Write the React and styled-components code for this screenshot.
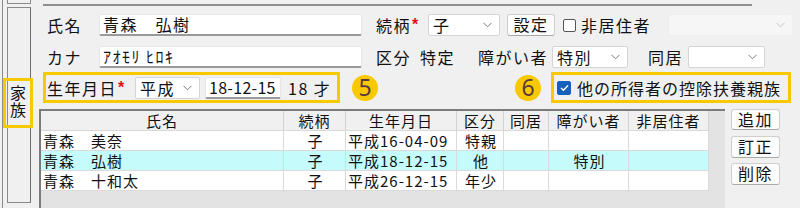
import React from 'react';
import styled, { createGlobalStyle } from 'styled-components';

const GlobalStyle = createGlobalStyle`
  html, body {
    margin: 0;
    padding: 0;
    background: #f0f0f0;
    font-family: "Noto Sans CJK JP", "Noto Sans", sans-serif;
    color: #111;
  }
  * { box-sizing: border-box; }
`;

const YELLOW = '#f9c900';

const Page = styled.div`
  display: flex;
  width: 800px;
  height: 208px;
  overflow: hidden;
`;

const SideBar = styled.div`
  width: 41px;
  margin-left: 2px;
  border-left: 1px solid #8a8a8a;
  display: flex;
  flex-direction: column;
  flex-shrink: 0;
`;

const TopStub = styled.div`
  margin-left: 4px;
  width: 24px;
  height: 4px;
  border: 1px solid #8a8a8a;
  border-top: none;
`;

const Tab = styled.div`
  margin-left: 4px;
  margin-top: 3px;
  width: 24px;
  height: 196px;
  border: 1px solid #8a8a8a;
  border-right-color: #6e6e6e;
`;

const TabLabel = styled.div`
  margin-top: 70px;
  margin-left: -5px;
  width: 30px;
  height: 50px;
  border: 3px solid ${YELLOW};
  display: flex;
  justify-content: center;
  padding-top: 4px;
`;

const Vertical = styled.span`
  writing-mode: vertical-rl;
  font-size: 16px;
  letter-spacing: 1px;
  line-height: 20px;
`;

const Main = styled.div`
  flex: 1;
  display: flex;
  flex-direction: column;
  padding-left: 2px;
`;

const Rule = styled.div`
  margin-top: 4px;
  margin-left: -2px;
  width: 709px;
  border-top: 2px solid #8e8e8e;
`;

const Row = styled.div`
  display: flex;
  align-items: center;
  height: ${p => p.$h || 22}px;
  margin-top: ${p => p.$mt || 0}px;
  padding-left: 2px;
`;

const Label = styled.span`
  display: inline-block;
  width: ${p => p.$w}px;
  margin-left: ${p => p.$ml || 0}px;
  font-size: 16px;
  letter-spacing: ${p => p.$ls ?? 1.5}px;
  white-space: nowrap;
  flex-shrink: 0;
`;

const Req = styled.span`
  color: #e01010;
  font-family: "Liberation Sans", sans-serif;
  font-weight: bold;
  font-size: 16px;
  vertical-align: 2px;
  letter-spacing: 0;
  margin-left: 1px;
`;

const TextBox = styled.div`
  width: ${p => p.$w}px;
  margin-left: ${p => p.$ml || 0}px;
  height: 22px;
  background: #fff;
  border: 1px solid #e6e6e6;
  border-bottom: 2px solid #9a9a9a;
  border-radius: 2px;
  font-size: 16px;
  line-height: 19px;
  padding-left: 3px;
  letter-spacing: ${p => p.$ls ?? 1.5}px;
  flex-shrink: 0;
  white-space: nowrap;
`;

const SelectBox = styled.div`
  width: ${p => p.$w}px;
  margin-left: ${p => p.$ml || 0}px;
  height: 22px;
  display: flex;
  align-items: center;
  justify-content: space-between;
  background: ${p => (p.$disabled ? '#f6f6f6' : '#fff')};
  border: 1px solid ${p => (p.$disabled ? '#efefef' : '#d4d4d4')};
  border-radius: 2px;
  padding: 0 7px 0 4px;
  font-size: 16px;
  letter-spacing: 1.5px;
  flex-shrink: 0;
`;

const Chevron = ({ light }) => (
  <svg width="9" height="6" viewBox="0 0 9 6">
    <polyline points="0.5,0.8 4.5,4.8 8.5,0.8" fill="none" stroke={light ? '#c4c4c4' : '#7a7a7a'} strokeWidth="1" />
  </svg>
);

const Select = ({ w, ml, value, disabled }) => (
  <SelectBox $w={w} $ml={ml} $disabled={disabled}>
    <span>{value}</span>
    <Chevron light={disabled} />
  </SelectBox>
);

const Button = styled.div`
  width: ${p => p.$w}px;
  height: ${p => p.$h || 21}px;
  margin-left: ${p => p.$ml || 0}px;
  margin-top: ${p => p.$mt || 0}px;
  background: #fcfcfc;
  border: 1px solid #cfcfcf;
  border-bottom-color: #a9a9a9;
  border-radius: 3px;
  font-size: 16px;
  letter-spacing: 1.5px;
  line-height: 19px;
  text-align: center;
  flex-shrink: 0;
`;

const Check = styled.span`
  display: inline-flex;
  align-items: center;
  justify-content: center;
  width: ${p => (p.$on ? 14 : 13)}px;
  height: ${p => (p.$on ? 14 : 13)}px;
  margin-left: ${p => p.$ml || 0}px;
  border-radius: 2px;
  border: 1px solid ${p => (p.$on ? '#1560bd' : '#555')};
  background: ${p => (p.$on ? '#1560bd' : '#fff')};
  flex-shrink: 0;
`;

const Group = styled.div`
  display: flex;
  align-items: center;
  width: ${p => p.$w}px;
  height: 31px;
  margin-left: ${p => p.$ml || 0}px;
  border: 3px solid ${YELLOW};
  padding-left: ${p => p.$pl || 0}px;
  flex-shrink: 0;
`;

const Badge = styled.span`
  display: inline-flex;
  align-items: center;
  justify-content: center;
  width: 26px;
  height: 26px;
  margin-left: ${p => p.$ml || 0}px;
  border-radius: 50%;
  background: ${YELLOW};
  color: #5a3a3c;
  font-family: "Noto Sans", "Open Sans", sans-serif;
  font-size: 23px;
  line-height: 1;
  flex-shrink: 0;
`;

const Lower = styled.div`
  display: flex;
  margin-top: 6px;
  margin-left: -6px;
  flex: 1;
`;

const TableWrap = styled.div`
  width: 686px;
  height: 100px;
  background: #e3e3e3;
  border-top: 2px solid #7b7b7b;
  border-left: 2px solid #7b7b7b;
  flex-shrink: 0;
`;

const Grid = styled.div`
  display: grid;
  grid-template-columns: 243px 62px 111px 47px 45px 80px 80px;
  width: 668px;
`;

const Head = styled.div`
  height: 20px;
  background: #f0f0f0;
  border-right: 1px solid #d2d2d2;
  border-bottom: 1px solid #d8d8d8;
  font-size: 15px;
  letter-spacing: 1px;
  line-height: 19px;
  text-align: center;
`;

const Cell = styled.div`
  height: 20px;
  background: ${p => (p.$sel ? '#c6fbfb' : '#fff')};
  border-right: 1px solid #dadada;
  border-bottom: 1px solid #dadada;
  font-size: 15px;
  letter-spacing: 1px;
  line-height: 19px;
  padding-left: 2px;
  text-align: ${p => p.$align || 'left'};
  white-space: nowrap;
  overflow: hidden;
`;

const Side = styled.div`
  display: flex;
  flex-direction: column;
  margin-left: 6px;
`;

const columns = [
  { title: '氏名', align: 'left' },
  { title: '続柄', align: 'center' },
  { title: '生年月日', align: 'left' },
  { title: '区分', align: 'center' },
  { title: '同居', align: 'center' },
  { title: '障がい者', align: 'center' },
  { title: '非居住者', align: 'center' },
];

const rows = [
  ['青森　美奈', '子', '平成16-04-09', '特親', '', '', ''],
  ['青森　弘樹', '子', '平成18-12-15', '他', '', '特別', ''],
  ['青森　十和太', '子', '平成26-12-15', '年少', '', '', ''],
];

export default function App() {
  return (
    <>
      <GlobalStyle />
      <Page>
        <SideBar>
          <TopStub />
          <Tab>
            <TabLabel>
              <Vertical>家族</Vertical>
            </TabLabel>
          </Tab>
        </SideBar>
        <Main>
          <Rule />
          <Row $mt={8}>
            <Label $w={52}>氏名</Label>
            <TextBox $w={263}>青森　弘樹</TextBox>
            <Label $w={52} $ml={14}>続柄<Req>*</Req></Label>
            <Select w={72} value="子" />
            <Button $w={48} $h={22} $ml={7}>設定</Button>
            <Check $ml={8} />
            <Label $w={80} $ml={5}>非居住者</Label>
            <Select w={125} ml={7} value="" disabled />
          </Row>
          <Row $mt={10}>
            <Label $w={52}>カナ</Label>
            <TextBox $w={263} $ls={1.5}>ｱｵﾓﾘ ﾋﾛｷ</TextBox>
            <Label $w={44} $ml={14}>区分</Label>
            <Label $w={58}>特定</Label>
            <Label $w={74}>障がい者</Label>
            <Select w={76} value="特別" />
            <Label $w={40} $ml={20}>同居</Label>
            <Select w={77} value="" />
          </Row>
          <Row $mt={4} $h={31}>
            <Group $w={297} $ml={-4} $pl={1}>
              <Label $w={88}>生年月日<Req>*</Req></Label>
              <Select w={65} value="平成" />
              <TextBox $w={76} $ml={5} $ls={0.3}>18-12-15</TextBox>
              <Label $w={50} $ml={7}>18 才</Label>
            </Group>
            <Badge $ml={12}>5</Badge>
            <Badge $ml={137}>6</Badge>
            <Group $w={240} $ml={10} $pl={3}>
              <Check $on>
                <svg width="9" height="8" viewBox="0 0 9 8">
                  <polyline points="1,4 3.5,6.3 8,1.5" fill="none" stroke="#fff" strokeWidth="1.4" />
                </svg>
              </Check>
              <Label $w={215} $ml={6} $ls={1}>他の所得者の控除扶養親族</Label>
            </Group>
          </Row>
          <Lower>
            <TableWrap>
              <Grid>
                {columns.map(c => (
                  <Head key={c.title}>{c.title}</Head>
                ))}
                {rows.map((r, i) =>
                  r.map((v, j) => (
                    <Cell key={`${i}-${j}`} $sel={i === 1} $align={columns[j].align}>
                      {v}
                    </Cell>
                  ))
                )}
              </Grid>
            </TableWrap>
            <Side>
              <Button $w={49}>追加</Button>
              <Button $w={49} $h={22} $mt={6}>訂正</Button>
              <Button $w={49} $h={22} $mt={5}>削除</Button>
            </Side>
          </Lower>
        </Main>
      </Page>
    </>
  );
}
